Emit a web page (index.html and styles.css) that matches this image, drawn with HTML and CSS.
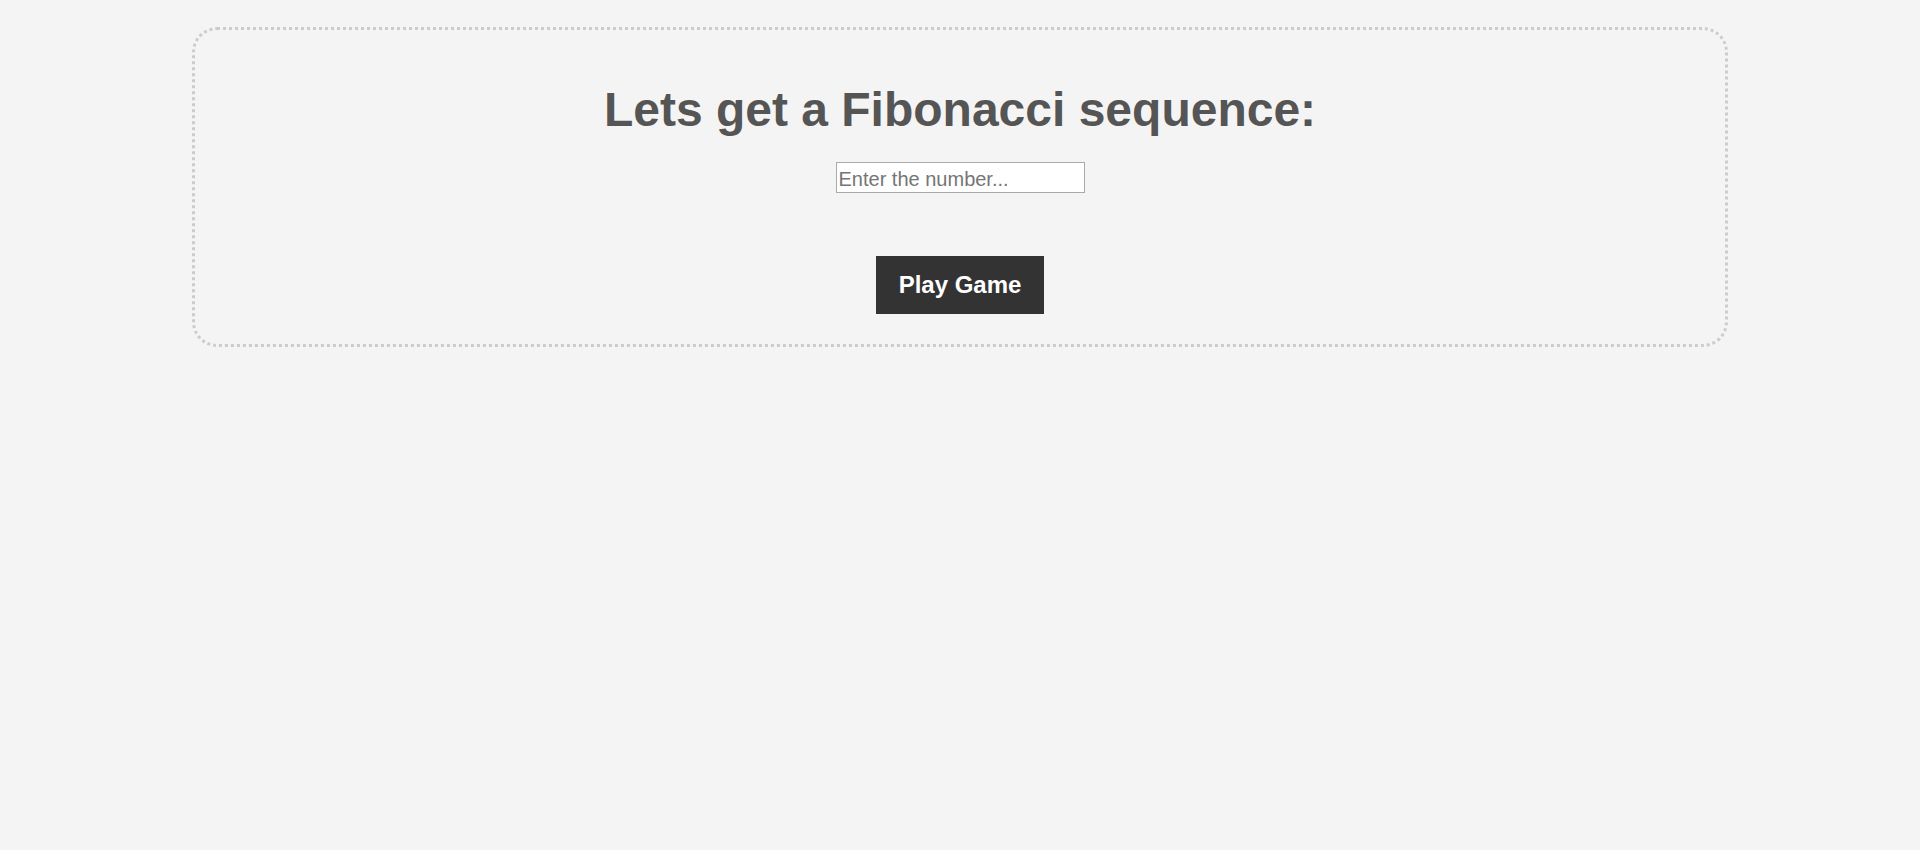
FILE: index.html
```html
<!DOCTYPE html>
<html>
<head>
<meta charset="utf-8">
<title>Fibonacci</title>
<link rel="stylesheet" href="styles.css">
</head>
<body>
<div class="card">
  <h1 class="title">Lets get a Fibonacci sequence:</h1>
  <input class="num-input" type="text" placeholder="Enter the number...">
  <button class="play-btn">Play Game</button>
</div>
</body>
</html>
```
FILE: styles.css
```css
html, body {
  margin: 0;
  padding: 0;
  background: #f4f4f4;
  font-family: "Liberation Sans", Arial, sans-serif;
}
.card {
  box-sizing: border-box;
  width: 1536px;
  margin: 27px auto 0;
  border: 3px dotted #cccccc;
  border-radius: 25px;
  padding: 52px 20px 30px;
  display: flex;
  flex-direction: column;
  align-items: center;
}
.title {
  margin: 0 0 25px;
  font-size: 48px;
  font-weight: bold;
  color: #555555;
  line-height: 55px;
  text-align: center;
}
.num-input {
  box-sizing: border-box;
  width: 249px;
  height: 31px;
  border: 1px solid #aaaaaa;
  padding: 3px 2px 0;
  font-family: "Liberation Sans", Arial, sans-serif;
  font-size: 20px;
  background: #ffffff;
  color: #333;
  outline: none;
}
.num-input::placeholder {
  color: #757575;
}
.play-btn {
  margin-top: 63px;
  box-sizing: border-box;
  width: 168px;
  height: 58px;
  border: none;
  background: #333333;
  color: #ffffff;
  font-family: "Liberation Sans", Arial, sans-serif;
  font-size: 24px;
  font-weight: bold;
  padding: 0;
  cursor: pointer;
}
```
